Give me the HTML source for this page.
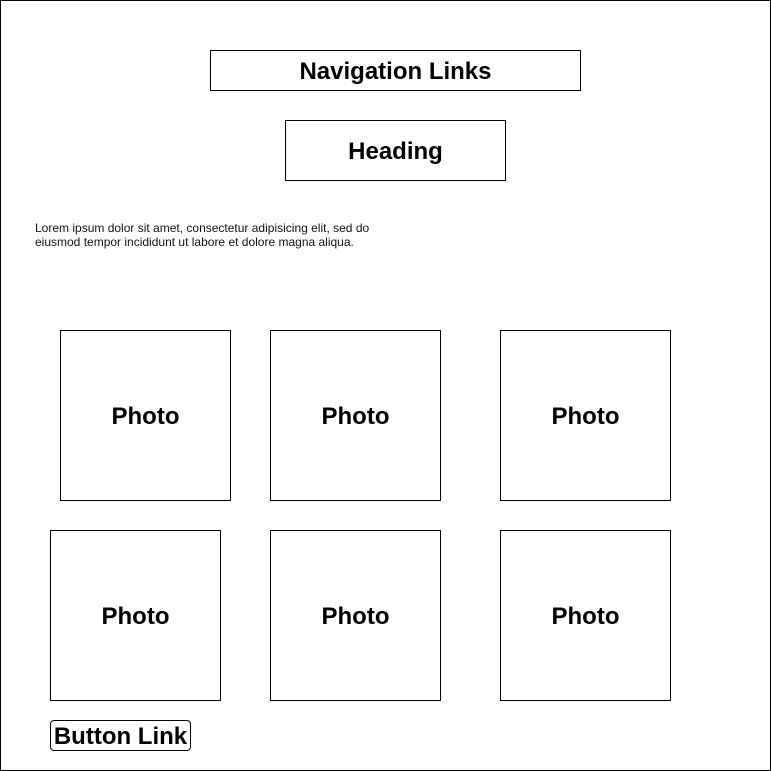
<!DOCTYPE html>
<html><head><style>
body{margin:0;width:771px;height:771px;position:relative;background:#fff;font-family:"Liberation Sans",Arial,sans-serif;overflow:hidden}
.b{position:absolute;border:1px solid #000;box-sizing:border-box;display:flex;align-items:center;justify-content:center;font-weight:bold;color:#000;font-size:24px;padding-top:2px}
.p{width:171px;height:171px}
.t{position:absolute;left:35px;top:221px;font-size:12px;line-height:14px;color:#111}
</style></head><body>
<div class="b" style="left:0;top:0;width:771px;height:771px"></div>
<div class="b" style="left:210px;top:50px;width:371px;height:41px">Navigation Links</div>
<div class="b" style="left:285px;top:120px;width:221px;height:61px">Heading</div>
<div class="t">Lorem ipsum dolor sit amet, consectetur adipisicing elit, sed do<br>eiusmod tempor incididunt ut labore et dolore magna aliqua.</div>
<div class="b p" style="left:60px;top:330px">Photo</div>
<div class="b p" style="left:270px;top:330px">Photo</div>
<div class="b p" style="left:500px;top:330px">Photo</div>
<div class="b p" style="left:50px;top:530px">Photo</div>
<div class="b p" style="left:270px;top:530px">Photo</div>
<div class="b p" style="left:500px;top:530px">Photo</div>
<div class="b" style="left:50px;top:720px;width:141px;height:31px;border-radius:4px">Button Link</div>
</body></html>
